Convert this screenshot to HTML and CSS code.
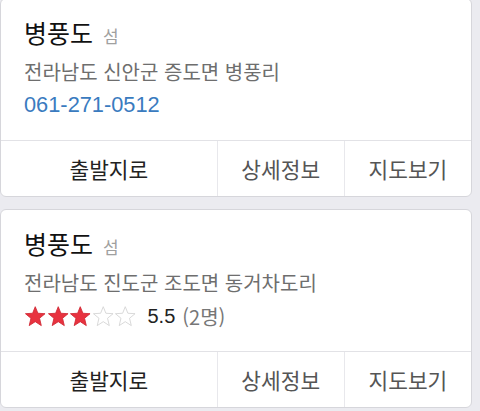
FILE: index.html
```html
<!DOCTYPE html>
<html lang="ko">
<head>
    <meta charset="UTF-8" />
    <meta name="viewport" content="width=device-width, initial-scale=1.0" />
    <title>병풍도</title>
    <link rel="stylesheet" href="styles.css">
</head>
<body>

<div class="list">
    <div class="card">
        <div class="info">
            <div class="title">병풍도<span class="kind">섬</span></div>
            <div class="addr">전라남도 신안군 증도면 병풍리</div>
            <div class="phone">061-271-0512</div>
        </div>
        <div class="actions">
            <div class="action main">출발지로</div>
            <div class="action">상세정보</div>
            <div class="action">지도보기</div>
        </div>
    </div>

    <div class="card">
        <div class="info">
            <div class="title">병풍도<span class="kind">섬</span></div>
            <div class="addr">전라남도 진도군 조도면 동거차도리</div>
            <div class="rating">
                <span class="stars">
                    <svg class="star on" viewBox="0 0 24 24"><polygon points="12,0.8 15,8.3 23.2,8.8 16.9,14 18.9,22.4 12,17.9 5.1,22.4 7.1,14 0.8,8.8 9,8.3"/></svg>
                    <svg class="star on" viewBox="0 0 24 24"><polygon points="12,0.8 15,8.3 23.2,8.8 16.9,14 18.9,22.4 12,17.9 5.1,22.4 7.1,14 0.8,8.8 9,8.3"/></svg>
                    <svg class="star on" viewBox="0 0 24 24"><polygon points="12,0.8 15,8.3 23.2,8.8 16.9,14 18.9,22.4 12,17.9 5.1,22.4 7.1,14 0.8,8.8 9,8.3"/></svg>
                    <svg class="star" viewBox="0 0 24 24"><polygon points="12,0.8 15,8.3 23.2,8.8 16.9,14 18.9,22.4 12,17.9 5.1,22.4 7.1,14 0.8,8.8 9,8.3"/></svg>
                    <svg class="star" viewBox="0 0 24 24"><polygon points="12,0.8 15,8.3 23.2,8.8 16.9,14 18.9,22.4 12,17.9 5.1,22.4 7.1,14 0.8,8.8 9,8.3"/></svg>
                </span>
                <span class="score">5.5</span>
                <span class="count">(2명)</span>
            </div>
        </div>
        <div class="actions">
            <div class="action main">출발지로</div>
            <div class="action">상세정보</div>
            <div class="action">지도보기</div>
        </div>
    </div>
</div>

</body>
</html>
```

FILE: styles.css
```css
body {
    margin: 0;
    font-family: 'Noto Sans CJK KR', sans-serif;
    background-color: #ebebf0;
    height: 100vh;
    overflow: hidden;
}

.list {
    display: flex;
    flex-direction: column;
    gap: 12px;
    width: 472px;
    margin-top: -2px;
}

.card {
    background: white;
    border: 1px solid #d6d6db;
    border-radius: 6px;
    overflow: hidden;
}

.info {
    padding: 18px 20px 22px 23px;
}

.title {
    height: 30px;
    font-size: 25px;
    line-height: 30px;
    color: #111;
}

.kind {
    font-size: 17px;
    line-height: 1;
    color: #a0a0a0;
    margin-left: 10px;
}

.addr {
    margin-top: 12px;
    height: 26px;
    font-size: 20px;
    line-height: 26px;
    color: #6e6e6e;
}

.phone {
    margin-top: 7px;
    height: 26px;
    font-family: 'Liberation Sans', sans-serif;
    font-size: 21.8px;
    line-height: 26px;
    color: #3a7bbf;
}

.rating {
    margin-top: 7px;
    height: 26px;
    display: flex;
    align-items: center;
}

.stars {
    display: flex;
}

.star {
    width: 22.5px;
    height: 21px;
    fill: #ffffff;
    stroke: #d4d4d4;
    stroke-width: 1;
}

.star.on {
    fill: #e8323f;
    stroke: #d02a36;
}

.score {
    margin-left: 11px;
    font-family: 'Liberation Sans', sans-serif;
    font-size: 20px;
    color: #222;
}

.count {
    margin-left: 7px;
    font-size: 20px;
    color: #777;
}

.actions {
    display: flex;
    border-top: 1px solid #e2e2e6;
    height: 55px;
}

.action {
    width: 127px;
    display: flex;
    justify-content: center;
    align-items: center;
    font-size: 21.4px;
    color: #555;
    border-left: 1px solid #e8e8ec;
}

.action.main {
    width: 217px;
    border-left: none;
    color: #222;
}
```
